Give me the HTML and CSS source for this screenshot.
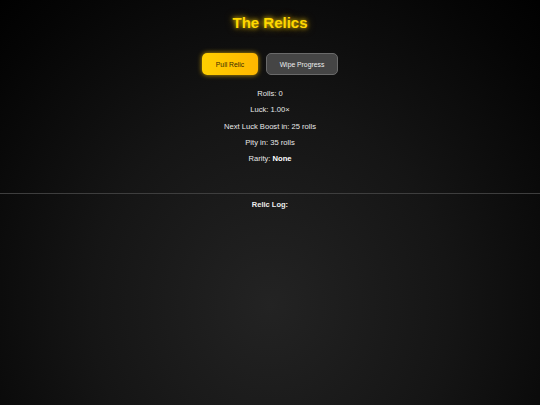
FILE: index.html
```html
<!DOCTYPE html>
<html lang="en">
<head>
<meta charset="utf-8">
<title>The Relics</title>
<link rel="stylesheet" href="styles.css">
</head>
<body>
<main class="page">
  <h1 class="title">The Relics</h1>
  <div class="actions">
    <button class="btn btn-pull">Pull Relic</button>
    <button class="btn btn-wipe">Wipe Progress</button>
  </div>
  <section class="stats">
    <div class="stat">Rolls: 0</div>
    <div class="stat">Luck: 1.00×</div>
    <div class="stat">Next Luck Boost in: 25 rolls</div>
    <div class="stat">Pity in: 35 rolls</div>
    <div class="stat">Rarity: <strong>None</strong></div>
  </section>
  <section class="log">
    <div class="log-title">Relic Log:</div>
  </section>
</main>
</body>
</html>
```
FILE: styles.css
```css
html, body {
  margin: 0;
  padding: 0;
  height: 100%;
}
body {
  background: radial-gradient(ellipse 400px 430px at 50% 305px, #232323 0%, #151515 45%, #050505 85%, #000 100%);
  background-color: #000;
  font-family: "Liberation Sans", Arial, sans-serif;
  color: #e6e6e6;
}
.page {
  display: flex;
  flex-direction: column;
  align-items: center;
  padding-top: 14px;
}
.title {
  margin: 0;
  font-size: 15px;
  line-height: 18px;
  font-weight: bold;
  color: #ffd700;
  text-shadow: 0 0 4px rgba(255, 215, 0, 0.9), 0 0 8px rgba(255, 200, 0, 0.5);
}
.actions {
  display: flex;
  gap: 8px;
  margin-top: 21px;
}
.btn {
  height: 22px;
  border-radius: 5px;
  font-family: "Liberation Sans", Arial, sans-serif;
  font-size: 6.8px;
  padding: 0;
  cursor: pointer;
}
.btn-pull {
  width: 56px;
  border: none;
  background: linear-gradient(90deg, #ffcf00, #ffb700);
  color: #3a2a00;
  box-shadow: 0 0 5px rgba(255, 200, 0, 0.75);
}
.btn-wipe {
  width: 72px;
  background: #454545;
  border: 1px solid #6a6a6a;
  color: #eee;
}
.stats {
  margin-top: 11px;
  display: flex;
  flex-direction: column;
  align-items: center;
}
.stat {
  font-size: 7.6px;
  line-height: 16.3px;
  color: #e8e8e8;
}
.stat strong {
  color: #fff;
}
.log {
  align-self: stretch;
  margin-top: 26px;
  border-top: 1px solid #3e3e3e;
  display: flex;
  justify-content: center;
  padding-top: 6px;
}
.log-title {
  font-size: 7.5px;
  line-height: 10px;
  font-weight: bold;
  color: #eee;
}
```
